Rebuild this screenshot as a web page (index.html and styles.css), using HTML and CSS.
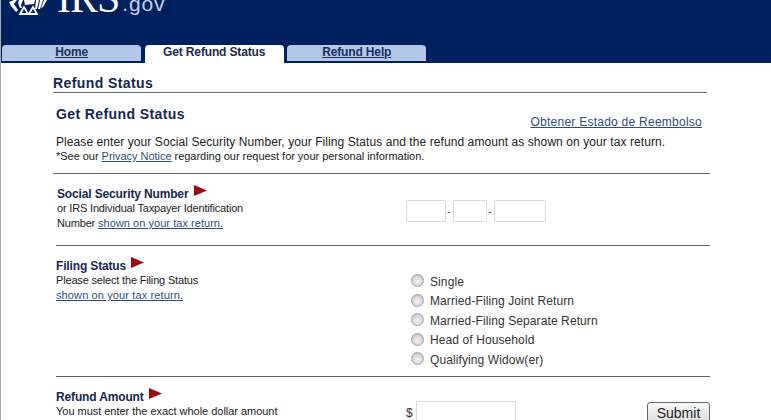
FILE: index.html
```html
<!DOCTYPE html>
<html lang="en">
<head>
<meta charset="utf-8">
<title>Get Refund Status</title>
<link rel="stylesheet" href="styles.css">
</head>
<body>
<header class="masthead">
  <div class="brand">
    <svg class="seal" width="40" height="15" viewBox="0 0 40 15" aria-hidden="true">
      <path d="M0 2l5-2h3L5 4l4 6-2 2-5-6zM10 0h4l-2 5 1 3-2 0-2-5zM27 0h3l-2 9h-2zM31 0h3l-3 9h-2zM35 0h3l-4 7-2 1zM15 0h11l-1 4-9 1z" fill="#fff"/>
      <path d="M11 14l4-7 4 7zM20 14l4-7 4 7z" fill="none" stroke="#fff" stroke-width="1.800"/>
    </svg>
    <span class="irs">IRS</span><span class="gov">.gov</span>
  </div>
  <nav class="tabs">
    <a class="tab" href="#">Home</a>
    <a class="tab active" href="#">Get Refund Status</a>
    <a class="tab" href="#">Refund Help</a>
  </nav>
</header>
<main class="page">
  <h1 class="page-title">Refund Status</h1>
  <div class="intro">
    <div class="intro-top">
      <h2 class="form-title">Get Refund Status</h2>
      <a class="lang" href="#">Obtener Estado de Reembolso</a>
    </div>
    <p class="lead">Please enter your Social Security Number, your Filing Status and the refund amount as shown on your tax return.</p>
    <p class="note">*See our <a href="#">Privacy Notice</a> regarding our request for your personal information.</p>
  </div>
  <section class="row row-ssn">
    <div class="help">
      <h3 class="label">Social Security Number <svg class="flag" width="13" height="12" viewBox="0 0 13 12"><path d="M0 0l13 5.500L0 11z"/></svg></h3>
      <p>or IRS Individual Taxpayer Identification</p>
      <p>Number <a href="#">shown on your tax return.</a></p>
    </div>
    <div class="ssn">
      <input class="box ssn-a" type="text" aria-label="SSN part 1"><span>-</span><input class="box ssn-b" type="text" aria-label="SSN part 2"><span>-</span><input class="box ssn-c" type="text" aria-label="SSN part 3">
    </div>
  </section>
  <section class="row row-status">
    <div class="help">
      <h3 class="label">Filing Status <svg class="flag" width="13" height="12" viewBox="0 0 13 12"><path d="M0 0l13 5.500L0 11z"/></svg></h3>
      <p>Please select the Filing Status</p>
      <p><a href="#">shown on your tax return.</a></p>
    </div>
    <div class="radios">
      <label><input type="radio" name="fs">Single</label>
      <label><input type="radio" name="fs">Married-Filing Joint Return</label>
      <label><input type="radio" name="fs">Married-Filing Separate Return</label>
      <label><input type="radio" name="fs">Head of Household</label>
      <label><input type="radio" name="fs">Qualifying Widow(er)</label>
    </div>
  </section>
  <section class="row row-amount">
    <div class="help">
      <h3 class="label">Refund Amount <svg class="flag" width="13" height="12" viewBox="0 0 13 12"><path d="M0 0l13 5.500L0 11z"/></svg></h3>
      <p>You must enter the exact whole dollar amount</p>
    </div>
    <div class="amount">
      <span class="dollar">$</span><input class="box amt" type="text" aria-label="Refund amount">
      <button class="submit" type="button">Submit</button>
    </div>
  </section>
</main>
</body>
</html>
```
FILE: styles.css
```css
* { box-sizing: border-box; }
html, body { margin: 0; height: 420px; overflow: hidden; background: #fff; }
body { font-family: "Liberation Sans", Arial, sans-serif; color: #222; border-left: 1px solid #aaa; }
a { color: #2c5078; }
.masthead { height: 63px; background: #00205f; display: flex; flex-direction: column; justify-content: space-between; overflow: hidden; }
.brand { display: flex; align-items: flex-end; height: 18px; padding-left: 8px; }
.seal { flex: none; margin-bottom: 3px; }
.irs { font-family: "Liberation Serif", serif; font-size: 42px; line-height: 30px; height: 30px; color: #fff; margin: 0 0 5px 8px; letter-spacing: -1px; }
.gov { font-size: 21px; line-height: 22px; color: #c6d0e2; margin: 0 0 3px 3px; letter-spacing: .8px; }
.tabs { display: flex; gap: 3.400px; padding-left: 1px; }
.tab { width: 139.200px; height: 18px; background: #b3c7e6; border-radius: 4px 4px 0 0; border-bottom: 2px solid #00205f; text-align: center; font-size: 12px; font-weight: bold; line-height: 15px; color: #1c2f66; letter-spacing: -.15px; }
.tab.active { background: #fff; border-bottom-color: #fff; color: #1c2a4a; text-decoration: none; }
.page { width: 654px; margin-left: 52px; }
.page-title { margin: 0; height: 30px; padding-top: 12px; font-size: 14px; line-height: 16px; color: #14284e; border-bottom: 1px solid #666; letter-spacing: .4px; }
.intro { padding: 0 0 0 3px; height: 81px; border-bottom: 1px solid #666; margin-right: -3px; }
.intro-top { display: flex; justify-content: space-between; height: 35px; padding-right: 8px; }
.form-title { margin: 13px 0 0; font-size: 14px; line-height: 16px; color: #14284e; letter-spacing: .4px; }
.lang { font-size: 12px; line-height: 14px; margin-top: 22px; letter-spacing: .25px; }
.lead { margin: 7px 0 0; font-size: 12px; line-height: 14px; letter-spacing: .08px; white-space: nowrap; }
.note { margin: 1px 0 0; font-size: 11px; line-height: 13px; letter-spacing: -.03px; white-space: nowrap; }
.row { display: grid; grid-template-columns: 350px 1fr; margin-left: 3px; margin-right: -3px; border-bottom: 1px solid #666; }
.row-ssn { height: 72px; padding-top: 11px; }
.row-status { height: 131px; padding-top: 11px; }
.row-amount { border-bottom: 0; padding-top: 11px; height: 60px; }
.label { margin: 0; font-size: 12px; line-height: 14px; color: #14284e; white-space: nowrap; letter-spacing: -.15px; }
.flag { fill: #9c0a10; vertical-align: 1px; margin-left: 2px; }
.help p { margin: 0; font-size: 11px; line-height: 15px; letter-spacing: -.17px; white-space: nowrap; }
.help a { letter-spacing: .12px; }
.row-ssn .help a { letter-spacing: .04px; }
.row-amount .help p { letter-spacing: -.03px; }
.row-ssn .help { padding-left: 1px; }
.box { border: 1px solid #dcdcdc; border-radius: 1px; background: #fff; height: 22px; padding: 0; display: block; }
.ssn { display: flex; align-items: center; height: 22px; margin-top: 15px; font-size: 11px; color: #555; }
.ssn-a { width: 40px; }
.ssn-b { width: 34px; }
.ssn-c { width: 52px; }
.ssn span { width: 7px; padding-left: 1px; }
.radios { padding: 15px 0 0 5px; display: flex; flex-direction: column; }
.radios label { display: flex; align-items: center; height: 19.500px; font-size: 12px; letter-spacing: .1px; color: #333; }
.radios input { appearance: none; width: 13px; height: 13px; margin: -2px 6px 0 0; flex: none; border-radius: 50%; border: 1px solid #a5a5a5; background: radial-gradient(circle at 50% 60%, #f2f2f2 0, #dcdcdc 45%, #b5b5b5 100%); }
.amount { display: flex; align-items: flex-start; margin-top: 13px; font-size: 12px; color: #333; }
.dollar { width: 10px; padding-top: 5px; }
.amt { width: 100px; height: 24px; }
.submit { margin-left: 131px; margin-top: 1px; width: 63px; height: 22px; padding: 0; font: 14px "Liberation Sans", Arial, sans-serif; color: #222; background: linear-gradient(#f8f8f8, #dcdcdc); border: 1px solid #666; border-radius: 3px; }
```
